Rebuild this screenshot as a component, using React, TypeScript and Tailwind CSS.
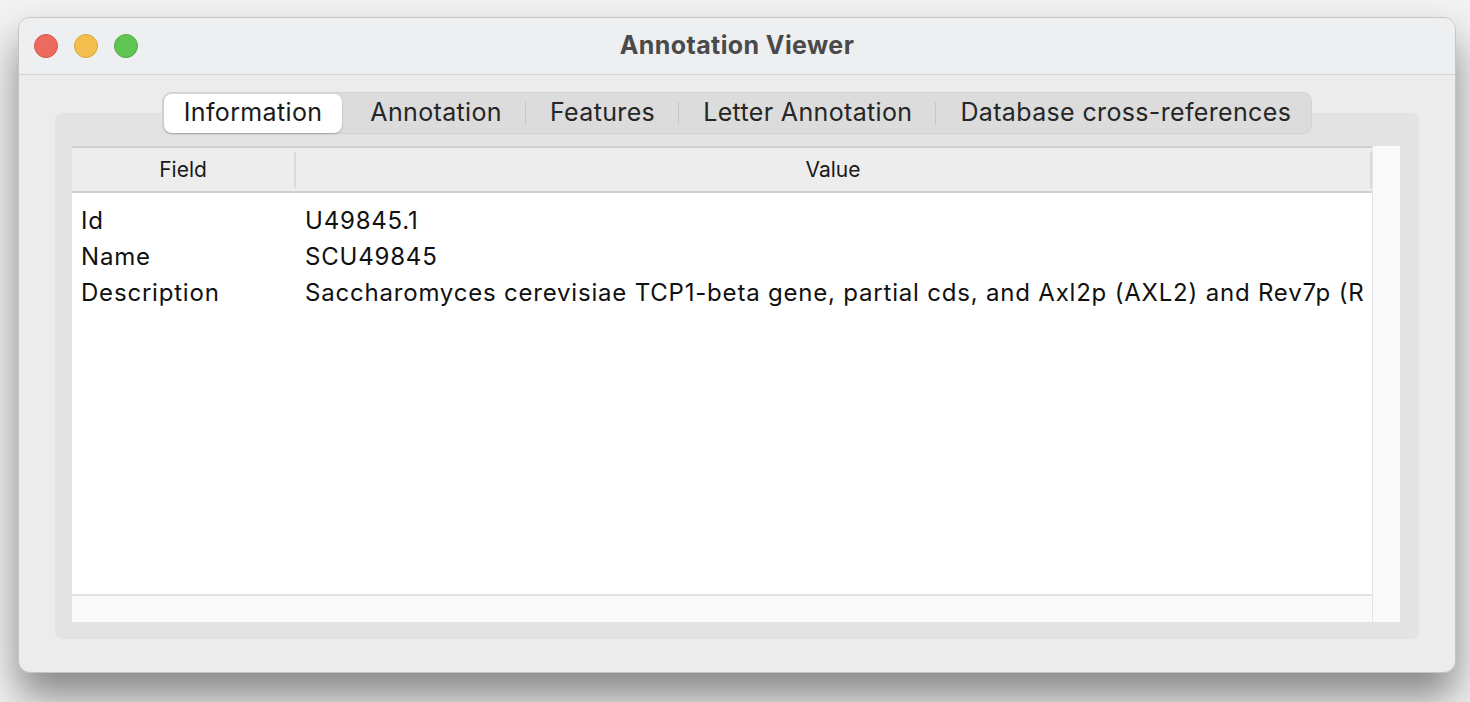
const tabs = ['Information', 'Annotation', 'Features', 'Letter Annotation', 'Database cross-references']

const rows = [
    { field: 'Id', value: 'U49845.1' },
    { field: 'Name', value: 'SCU49845' },
    { field: 'Description', value: 'Saccharomyces cerevisiae TCP1-beta gene, partial cds, and Axl2p (AXL2) and Rev7p (R' },
]

function TrafficLights() {
    return (
        <div className="flex items-center gap-[16px]">
            <span className="w-[24px] h-[24px] rounded-full bg-[#ed6a5e] border border-[#d4564a]" />
            <span className="w-[24px] h-[24px] rounded-full bg-[#f5bf4f] border border-[#d9a440]" />
            <span className="w-[24px] h-[24px] rounded-full bg-[#61c554] border border-[#4fab43]" />
        </div>
    )
}

function TabBar() {
    return (
        <div className="relative z-10 mx-auto flex h-[42px] items-center rounded-[9px] bg-[#dcdcdc] border border-[#d2d2d2] pl-[1px] text-[25px] tracking-[0.35px]">
            {tabs.map((tab, i) => {
                const last = i === tabs.length - 1
                return (
                    <div key={tab} className="flex items-center h-full">
                        {i > 1 && <span className="w-[1px] h-[22px] bg-[#c6c6c6]" />}
                        {i === 0 ? (
                            <div className="flex items-center h-[39px] px-[20px] rounded-[8px] bg-white shadow-[0_1px_2px_rgba(0,0,0,0.25)] text-[#1a1a1a]">
                                {tab}
                            </div>
                        ) : (
                            <div className={i === 1
                                ? 'flex items-center h-[39px] pl-[28px] pr-[23px] text-[#262626]'
                                : last
                                    ? 'flex items-center h-[39px] pl-[24px] pr-[20px] text-[#262626]'
                                    : 'flex items-center h-[39px] pl-[24px] pr-[23px] text-[#262626]'}>
                                {tab}
                            </div>
                        )}
                    </div>
                )
            })}
        </div>
    )
}

export default function App() {
    return (
        <div className="h-[702px] w-[1470px] overflow-hidden bg-[#f2f2f2] pt-[17px] pl-[18px] font-['Inter','Liberation_Sans',sans-serif]">
            <div className="flex h-[656px] w-[1438px] flex-col overflow-hidden rounded-[12px] border border-[#c4c4c4] bg-[#ececec] shadow-[0_24px_40px_rgba(0,0,0,0.45)]">
                <div className="relative flex h-[57px] shrink-0 items-center border-b border-[#d3d3d3] bg-[#eeeff0] px-[15px]">
                    <TrafficLights />
                    <div className="absolute inset-0 flex items-center justify-center text-[25px] font-bold tracking-[0.4px] text-[#4a4a4a]">
                        Annotation Viewer
                    </div>
                </div>
                <div className="flex flex-col px-[36px] pt-[17px]">
                    <TabBar />
                    <div className="-mt-[21px] h-[526px] rounded-[7px] bg-[#e3e3e3] pt-[33px] pl-[17px] pr-[19px]">
                        <div className="flex h-[476px]">
                            <div className="flex w-[1300px] flex-col">
                                <div className="flex h-[47px] shrink-0 items-center border-t-2 border-b-2 border-[#d0d0d0] bg-[#ededed] text-[21px] text-[#1a1a1a]">
                                    <div className="flex h-full w-[222px] items-center justify-center">Field</div>
                                    <span className="h-[36px] w-[2px] bg-[#dadada]" />
                                    <div className="flex h-full flex-1 items-center justify-center">Value</div>
                                    <span className="h-[36px] w-[2px] bg-[#dadada]" />
                                </div>
                                <div className="flex-1 overflow-hidden bg-white pt-[10px] text-[24px] tracking-[0.8px] text-[#111]">
                                    {rows.map(r => (
                                        <div key={r.field} className="flex h-[36px] items-center whitespace-nowrap">
                                            <div className="w-[233px] shrink-0 pl-[9px]">{r.field}</div>
                                            <div className="overflow-hidden">{r.value}</div>
                                        </div>
                                    ))}
                                </div>
                                <div className="h-[28px] shrink-0 border-t-2 border-[#e2e2e2] bg-[#f9f9f9]" />
                            </div>
                            <div className="h-[476px] w-[28px] border-l border-[#e4e4e4] bg-[#f9f9f9]" />
                        </div>
                    </div>
                </div>
            </div>
        </div>
    )
}
